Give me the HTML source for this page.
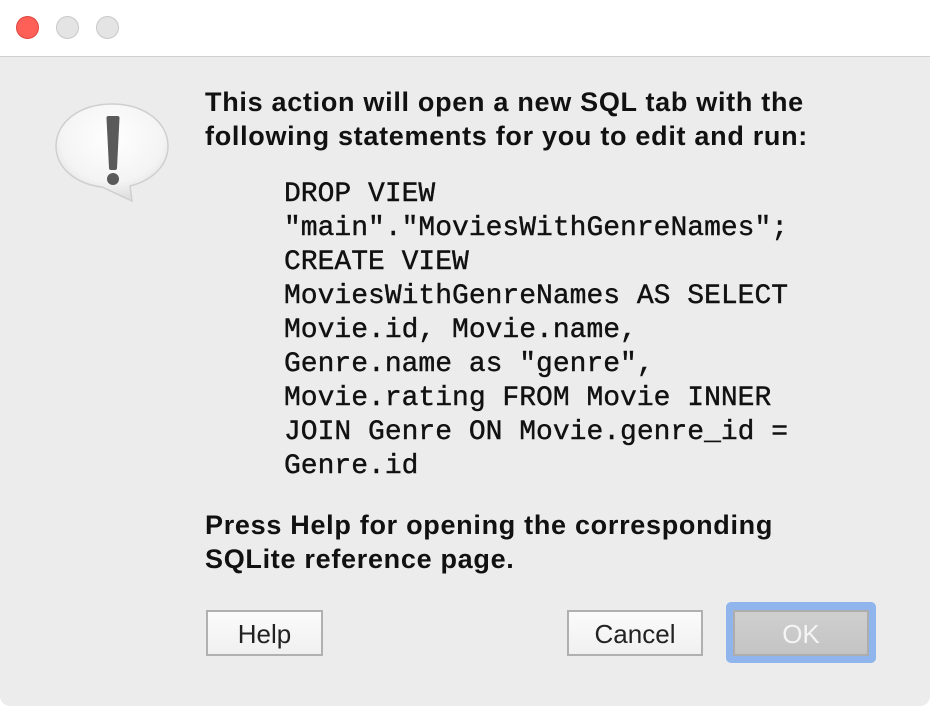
<!DOCTYPE html>
<html><head><style>
html,body{margin:0;padding:0;width:930px;height:706px;overflow:hidden;background:#fff;}
.win{position:absolute;left:0;top:0;width:930px;height:706px;background:#ececec;border-radius:0 0 10px 10px;overflow:hidden;}
.title{position:absolute;left:0;top:0;width:930px;height:56px;background:#fff;border-bottom:1px solid #d0d0d0;}
.dot{position:absolute;top:16px;width:23px;height:23px;border-radius:50%;box-sizing:border-box;}
.t{position:absolute;left:205px;font:bold 27px "Liberation Sans",sans-serif;color:#111;white-space:nowrap;letter-spacing:0.7px;}
.mono{position:absolute;left:284px;top:178px;font:28px/34px "Liberation Mono",monospace;color:#111;white-space:pre;-webkit-text-stroke:0.4px #111;}
.btn{position:absolute;top:610px;height:46px;box-sizing:border-box;border:2px solid #b0b0b0;background:linear-gradient(#fbfbfb,#f0f0f0);font:26px "Liberation Sans",sans-serif;color:#222;text-align:center;line-height:44px;}
</style></head><body>
<div class="win">
<div class="title">
<div class="dot" style="left:16px;background:#fe5f57;border:1px solid #e0443e"></div>
<div class="dot" style="left:56px;background:#e4e4e4;border:1px solid #c8c8c8"></div>
<div class="dot" style="left:96px;background:#e4e4e4;border:1px solid #c8c8c8"></div>
</div>
<svg style="position:absolute;left:50px;top:98px" width="125" height="112" viewBox="0 0 125 112">
<defs><radialGradient id="g" cx="50%" cy="35%" r="65%"><stop offset="0" stop-color="#fff"/><stop offset="0.7" stop-color="#f4f4f4"/><stop offset="1" stop-color="#dcdcdc"/></radialGradient></defs>
<path d="M62 6 C30 6 6 24 6 48 C6 70 26 86 52 89 L82 103 L80 88 C104 82 118 66 118 48 C118 24 94 6 62 6 Z" fill="url(#g)" stroke="#cfcfcf" stroke-width="1.5"/>
<path d="M58.5 20 L67.5 20 L65 70 L61 70 Z" fill="#5a5a5a" stroke="#5a5a5a" stroke-width="4" stroke-linejoin="round"/>
<circle cx="63" cy="81" r="6" fill="#5a5a5a"/>
</svg>
<div class="t" style="top:87px">This action will open a new SQL tab with the</div>
<div class="t" style="top:121px">following statements for you to edit and run:</div>
<div class="mono">DROP VIEW
"main"."MoviesWithGenreNames";
CREATE VIEW
MoviesWithGenreNames AS SELECT
Movie.id, Movie.name,
Genre.name as "genre",
Movie.rating FROM Movie INNER
JOIN Genre ON Movie.genre_id =
Genre.id</div>
<div class="t" style="top:510px">Press Help for opening the corresponding</div>
<div class="t" style="top:544px">SQLite reference page.</div>
<div class="btn" style="left:206px;width:117px">Help</div>
<div class="btn" style="left:567px;width:136px">Cancel</div>
<div style="position:absolute;left:726px;top:602px;width:150px;height:61px;box-sizing:border-box;border-radius:5px;background:#8fb5ec"></div>
<div class="btn" style="left:733px;width:136px;background:linear-gradient(#cfcfcf,#c4c4c4);color:#f4f4f4;border-color:#adadad">OK</div>
</div>
</body></html>
